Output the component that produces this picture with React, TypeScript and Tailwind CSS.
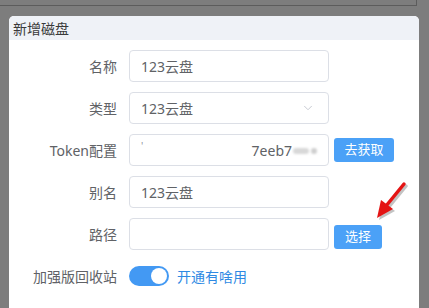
import React from 'react';
import { ChevronDown } from 'lucide-react';

const font = { fontFamily: '"Noto Sans", "Noto Sans CJK SC", sans-serif' };

const Row: React.FC<{ label: string; children: React.ReactNode }> = ({ label, children }) => (
  <div className="flex items-center h-8">
    <div className="w-[120px] pr-3 text-right text-[14px] text-[#606266] shrink-0">{label}</div>
    {children}
  </div>
);

const Input: React.FC<{ value?: string; children?: React.ReactNode }> = ({ value, children }) => (
  <div className="w-[200px] h-8 rounded border border-[#dcdfe6] bg-white px-[11px] flex items-center text-[14px] text-[#606266]">
    {value}
    {children}
  </div>
);

const Btn: React.FC<{ text: string; w: string }> = ({ text, w }) => (
  <button className={`ml-[5px] h-6 ${w} rounded-[3px] bg-[#4ba1f7] text-white text-[13px] flex items-center justify-center`}>
    {text}
  </button>
);

export default function App() {
  return (
    <div className="relative w-[429px] h-[308px] overflow-hidden bg-[#7d7d7d]" style={font}>
      {/* panel edges behind overlay */}
      <div className="h-[6px] w-[417px] border-b border-r border-[#5c5c5c]" />
      <div className="flex">
        <div className="mt-[10px] ml-[9px] w-[410px] h-[300px] rounded-t-[5px] bg-white overflow-hidden">
          <div className="h-6 bg-[#eff2f7] pl-1 flex items-center text-[14px] text-[#3a3a3a]">新增磁盘</div>
          <div className="pt-[10px] flex flex-col gap-[10px]">
            <Row label="名称">
              <Input value="123云盘" />
            </Row>
            <Row label="类型">
              <Input value="123云盘">
                <ChevronDown className="ml-auto mr-[2px] w-[14px] h-[14px] text-[#c0c4cc]" strokeWidth={1.5} />
              </Input>
            </Row>
            <Row label="Token配置">
              <Input>
                <span className="text-[#909399] text-[10px] -mt-2">'</span>
                <span className="ml-auto text-[14px] text-[#606266]">7eeb7</span>
                <span className="ml-[1px] w-[16px] h-[6px] mt-[2px] rounded bg-[#d8d8d8] blur-[1px]" />
                <span className="ml-[2px] w-[6px] h-[6px] mt-[2px] rounded bg-[#cfcfcf] blur-[1px]" />
              </Input>
              <Btn text="去获取" w="w-[60px]" />
            </Row>
            <Row label="别名">
              <Input value="123云盘" />
            </Row>
            <Row label="路径">
              <Input />
              <div className="mt-[5px]">
                <Btn text="选择" w="w-[48px]" />
              </div>
            </Row>
            <Row label="加强版回收站">
              <div className="w-10 h-5 rounded-full bg-[#4399f3] flex items-center justify-end pr-[2px]">
                <div className="w-4 h-4 rounded-full bg-white" />
              </div>
              <span className="ml-2 text-[14px] text-[#2e89e3]">开通有啥用</span>
            </Row>
          </div>
        </div>
      </div>
      {/* red annotation arrow */}
      <svg className="absolute left-[368px] top-[178px]" width="46" height="48" viewBox="0 0 46 48">
        <g transform="translate(2,2)" opacity="0.35">
          <line x1="36" y1="6" x2="18" y2="28" stroke="#555" strokeWidth="3.5" strokeLinecap="round" />
          <polygon points="9,40 13,22 25,31" fill="#555" />
        </g>
        <line x1="36" y1="6" x2="18" y2="28" stroke="#e41414" strokeWidth="3.5" strokeLinecap="round" />
        <polygon points="9,40 13,22 25,31" fill="#e41414" />
      </svg>
    </div>
  );
}
